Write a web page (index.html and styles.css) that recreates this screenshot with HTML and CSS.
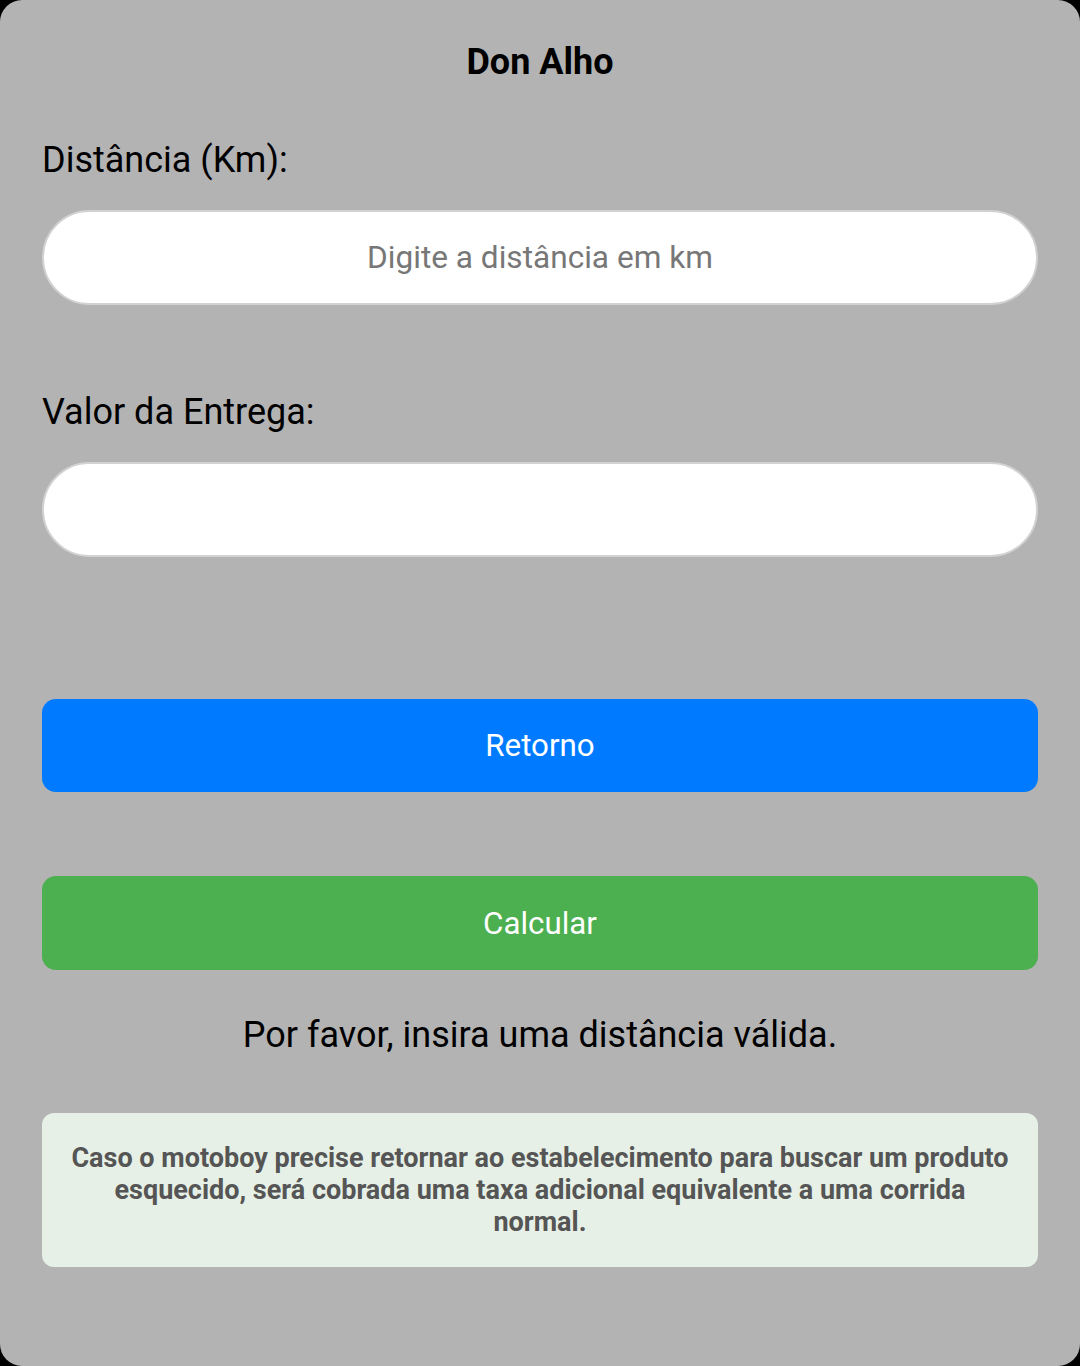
FILE: index.html
```html
<!DOCTYPE html>
<html lang="pt-BR">
<head>
<meta charset="utf-8">
<title>Don Alho</title>
<link rel="stylesheet" href="styles.css">
</head>
<body>
<div class="screen">
  <h1 class="title">Don Alho</h1>
  <label class="label label-first" for="dist">Distância (Km):</label>
  <input class="field" id="dist" type="text" placeholder="Digite a distância em km">
  <label class="label label-second" for="valor">Valor da Entrega:</label>
  <input class="field" id="valor" type="text">
  <button class="btn btn-blue" type="button">Retorno</button>
  <button class="btn btn-green" type="button">Calcular</button>
  <p class="message">Por favor, insira uma distância válida.</p>
  <div class="note">Caso o motoboy precise retornar ao estabelecimento para buscar um produto esquecido, será cobrada uma taxa adicional equivalente a uma corrida normal.</div>
</div>
</body>
</html>
```

FILE: styles.css
```css
* { box-sizing: border-box; }
html, body {
  margin: 0;
  padding: 0;
  background: #000;
  width: 1080px;
  height: 1366px;
  overflow: hidden;
}
body {
  font-family: Roboto, "Noto Sans", sans-serif;
}
.screen {
  width: 1080px;
  height: 1366px;
  background: #b3b3b3;
  border-radius: 22px;
  padding: 40px 42px 0;
  display: flex;
  flex-direction: column;
  align-items: stretch;
}
.title {
  margin: 0;
  font-size: 36px;
  line-height: 44px;
  font-weight: 700;
  text-align: center;
  color: #000;
}
.label {
  font-size: 36px;
  line-height: 40px;
  color: #000;
}
.label-first { margin-top: 56px; }
.label-second { margin-top: 87px; }
.field {
  margin-top: 30px;
  height: 95px;
  width: 100%;
  border: 2px solid #d2d2d2;
  border-radius: 48px;
  background: #fff;
  font-family: Roboto, sans-serif;
  font-size: 31.6px;
  text-align: center;
  color: #000;
  outline: none;
}
.field::placeholder { color: #777; }
.btn {
  width: 100%;
  border: none;
  border-radius: 14px;
  color: #fff;
  font-family: Roboto, sans-serif;
  font-size: 31.3px;
  cursor: pointer;
}
.btn-blue {
  margin-top: 142px;
  height: 93px;
  background: #007bff;
}
.btn-green {
  margin-top: 84px;
  height: 94px;
  background: #4caf50;
}
.message {
  margin: 43px 0 0;
  font-size: 36px;
  line-height: 44px;
  text-align: center;
  color: #000;
}
.note {
  margin-top: 56px;
  height: 154px;
  background: #e6f0e6;
  border-radius: 12px;
  padding: 29px 28px;
  font-size: 27px;
  line-height: 32px;
  font-weight: 700;
  color: #555;
  text-align: center;
}
```
